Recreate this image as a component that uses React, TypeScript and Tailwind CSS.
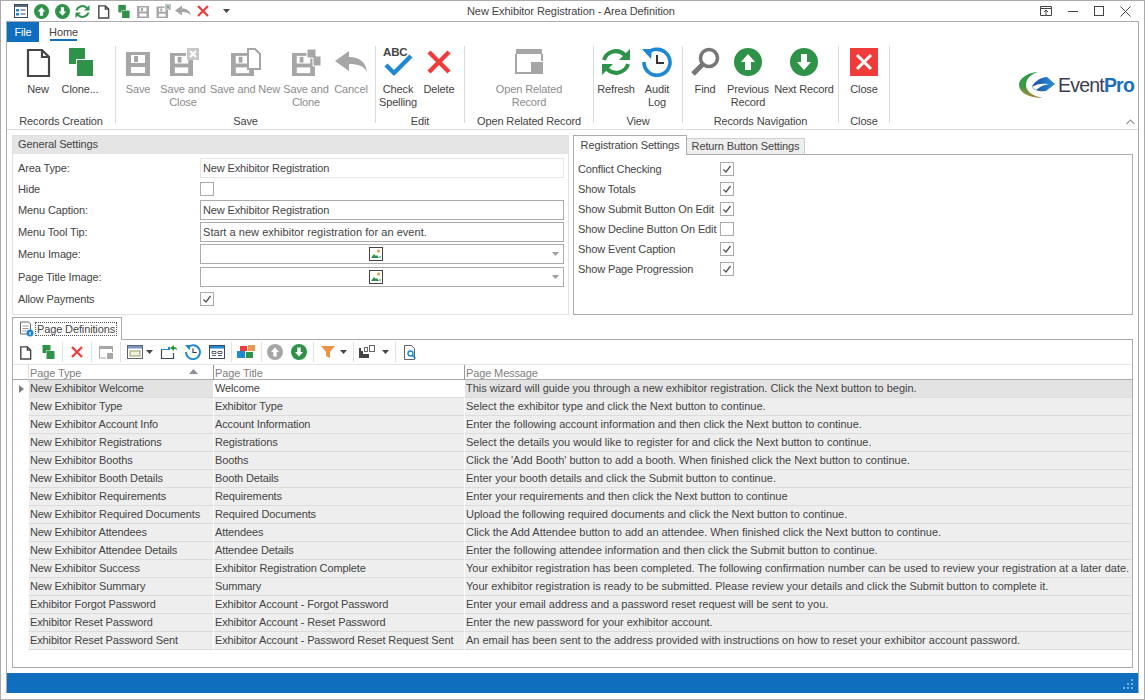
import React from "react";

const G = "#2e9348";
const GR = "#a6a6a6";
const R = "#ef3b39";
const B = "#1e88d2";
const D = "#454545";

type P = { s?: number };

const Doc = ({ s = 32 }: P) => (
  <svg width={s} height={s} viewBox="0 0 32 32">
    <path d="M6 4h14l7 7v19H6z" fill="#fff" stroke={D} strokeWidth={s < 20 ? 3 : 2.2} />
    <path d="M20 4v7h7" fill="none" stroke={D} strokeWidth={s < 20 ? 3 : 2.2} />
  </svg>
);
const Clone = ({ s = 32 }: P) => (
  <svg width={s} height={s} viewBox="0 0 32 32">
    <rect x="5" y="2" width="16" height="16" fill={G} />
    <rect x="12" y="13" width="18" height="18" fill="#fff" />
    <rect x="13" y="14" width="16" height="16" fill={G} />
  </svg>
);
const Disk = ({ x = 0, y = 0, w = 24, c = GR }: { x?: number; y?: number; w?: number; c?: string }) => {
  const k = w / 24;
  return (
    <g transform={`translate(${x} ${y}) scale(${k})`}>
      <path d="M0 0h24v24H0z" fill={c} />
      <rect x="5" y="3" width="14" height="8" fill="#fff" />
      <rect x="8" y="4" width="4" height="6" fill={c} />
      <rect x="5" y="15" width="14" height="6" fill="#fff" />
    </g>
  );
};
const Save = ({ s = 32 }: P) => (
  <svg width={s} height={s} viewBox="0 0 32 32"><Disk x={4} y={6} /></svg>
);
const SaveClose = ({ s = 32 }: P) => (
  <svg width={s} height={s} viewBox="0 0 32 32">
    <Disk x={3} y={7} w={23} />
    <rect x="19" y="1" width="13" height="13" fill="#fff" />
    <rect x="20" y="2" width="12" height="12" fill="#c8c8c8" />
    <path d="M23 5l6 6M29 5l-6 6" stroke={s < 20 ? "#6fa57d" : "#fff"} strokeWidth="2" />
  </svg>
);
const SaveNew = ({ s = 32 }: P) => (
  <svg width={s} height={s} viewBox="0 0 32 32">
    <Disk x={2} y={7} w={23} />
    <path d="M19 3h7l5 5v15H19z" fill="#fff" stroke={GR} strokeWidth="2" />
  </svg>
);
const SaveClone = ({ s = 32 }: P) => (
  <svg width={s} height={s} viewBox="0 0 32 32">
    <Disk x={2} y={7} w={23} />
    <path d="M17 3h9v7h5v10h-8V12h-6z" fill={GR} stroke="#fff" strokeWidth="1" />
  </svg>
);
const Cancel = ({ s = 32, c = GR }: P & { c?: string }) => (
  <svg width={s} height={s} viewBox="0 0 32 32">
    <path d="M0 15L14 5v6c10 0 17 5 18 15-3-6-9-8-18-8v7z" fill={c} />
  </svg>
);
const XIcon = ({ s = 32 }: P) => (
  <svg width={s} height={s} viewBox="0 0 32 32">
    <path d="M6 6l20 20M26 6L6 26" stroke={R} strokeWidth="4.4" />
  </svg>
);
const CheckAbc = () => (
  <svg width="34" height="34" viewBox="0 0 34 34">
    <text x="2" y="11" fontSize="11.5" fontWeight="700" fill={D} fontFamily="Liberation Sans">ABC</text>
    <path d="M5 20l8 8L30 11" fill="none" stroke={B} strokeWidth="4.4" />
  </svg>
);
const Related = () => (
  <svg width="32" height="32" viewBox="0 0 32 32">
    <path d="M3 3h26v5H3z" fill={GR} />
    <path d="M3 8v19h15M29 8v7" fill="none" stroke={GR} strokeWidth="2" />
    <rect x="18" y="16" width="12" height="12" fill={GR} />
  </svg>
);
const Circle = ({ s = 28, c = G, up = true }: P & { c?: string; up?: boolean }) => (
  <svg width={s} height={s} viewBox="0 0 28 28">
    <circle cx="14" cy="14" r="14" fill={c} />
    {up ? (
      <path d="M14 6l7 8h-4v8h-6v-8H7z" fill="#fff" />
    ) : (
      <path d="M14 22l7-8h-4V6h-6v8H7z" fill="#fff" />
    )}
  </svg>
);
const Refresh = ({ s = 30 }: P) => (
  <svg width={s} height={s} viewBox="0 0 30 30">
    <path d="M3 13C5 6 15 0 24 8" fill="none" stroke={G} strokeWidth="4" />
    <path d="M29 2v11H18z" fill={G} />
    <path d="M27 17c-2 7-12 13-21 5" fill="none" stroke={G} strokeWidth="4" />
    <path d="M1 28V17h11z" fill={G} />
  </svg>
);
const Audit = ({ s = 30 }: P) => (
  <svg width={s} height={s} viewBox="0 0 30 30">
    <path d="M5 7A13 13 0 1 1 2 15" fill="none" stroke={B} strokeWidth="3.6" />
    <path d="M0 2h10l-1 10z" fill={B} />
    <path d="M15 8v8h7" fill="none" stroke="#333" strokeWidth="2" />
  </svg>
);
const Find = () => (
  <svg width="30" height="30" viewBox="0 0 30 30">
    <circle cx="19" cy="11" r="8.5" fill="none" stroke="#777" strokeWidth="3.6" />
    <path d="M13 17L3 27" stroke="#777" strokeWidth="5" />
  </svg>
);
const CloseRed = () => (
  <svg width="28" height="28" viewBox="0 0 28 28">
    <rect width="28" height="28" fill={R} />
    <path d="M7 7l14 14M21 7L7 21" stroke="#fff" strokeWidth="3" />
  </svg>
);
const Form = () => (
  <svg width="14" height="14" viewBox="0 0 14 14">
    <rect x=".5" y=".5" width="13" height="13" fill="#fff" stroke="#3d4a5c" />
    <rect x="1" y="1" width="12" height="2" fill="#5a6b85" />
    <rect x="2" y="5" width="3" height="2.500" fill={B} />
    <rect x="2" y="9" width="3" height="2.500" fill={B} />
    <path d="M6.500 6h5M6.500 10h5" stroke="#3d4a5c" strokeWidth="1.200" />
  </svg>
);
const Caret = () => (
  <svg width="7" height="4" viewBox="0 0 7 4"><path d="M0 0h7L3.500 4z" fill="#444" /></svg>
);
const ImageGlyph = () => (
  <svg width="14" height="14" viewBox="0 0 14 14">
    <rect x=".5" y=".5" width="13" height="13" fill="#fff" stroke="#444" />
    <path d="M2 11l3-4 2 2 1-1 2 3z" fill={G} />
    <circle cx="9.500" cy="4" r="1.500" fill="#e8973f" />
    <path d="M10 9h2v2h-2z" fill={G} opacity=".5" />
  </svg>
);
const Check = ({ on = true }: { on?: boolean }) => (
  <span className="flex h-[14px] w-[14px] shrink-0 items-center justify-center border border-[#ababab] bg-white">
    {on && (
      <svg width="10" height="10" viewBox="0 0 10 10">
        <path d="M1.500 5.500L4 8l4.500-6" fill="none" stroke="#555" strokeWidth="1.300" />
      </svg>
    )}
  </span>
);

const Logo = () => (
  <svg width="37" height="28" viewBox="0 0 37 28">
    <defs>
      <linearGradient id="lg" x1="0" y1="0" x2="0" y2="1">
        <stop offset="0" stopColor="#2f9a4a" />
        <stop offset=".55" stopColor="#3f9a44" />
        <stop offset="1" stopColor="#b08b3c" />
      </linearGradient>
      <linearGradient id="lb" x1="0" y1="0" x2="1" y2="0">
        <stop offset="0" stopColor="#1a4fa0" />
        <stop offset="1" stopColor="#2a8fd8" />
      </linearGradient>
    </defs>
    <path d="M19 1C7 2 0 8 0 14c0 7 9 13 24 13C13 25 7 20 7 14 7 8 12 3 19 1z" fill="url(#lg)" />
    <path d="M13 16c2-6 10-10 15-10l8 7-9 7c-6 1-11 0-14-4z" fill="url(#lb)" />
    <path d="M13 16c4-3 10-4 17-3-6 1-9 3-13 6z" fill="#fff" />
  </svg>
);

type Btn = { w: number; icon?: React.ReactNode; l: string[]; dis?: boolean };

const RBtn = ({ w, icon, l, dis }: Btn) => (
  <div className="flex h-[73px] shrink-0 flex-col items-center" style={{ width: w }}>
    <div className="flex h-[41px] w-full items-center justify-center pb-[4px] pt-[3px]">{icon}</div>
    <div className={`text-center leading-[13px] ${dis ? "text-[#8c8c8c]" : "text-[#444]"}`}>
      {l.map((t) => (
        <div key={t} className="whitespace-nowrap">{t}</div>
      ))}
    </div>
  </div>
);

const Group = ({ w, pl = 2, label, items }: { w: number; pl?: number; label: string; items: Btn[] }) => (
  <div className="flex shrink-0 flex-col" style={{ width: w }}>
    <div className="flex" style={{ paddingLeft: pl }}>
      {items.map((b) => <RBtn key={b.l.join()} {...b} />)}
    </div>
    <div className="h-[13px] text-center leading-[13px] text-[#444]">{label}</div>
  </div>
);
const RSep = () => <div className="my-[4px] w-px shrink-0 bg-[#dcdcdc]" />;
const TSep = () => <div className="mx-[6px] h-[20px] w-px shrink-0 bg-[#e1e1e1]" />;
const TSepS = () => <div className="ml-[6px] mr-[5px] h-[20px] w-px shrink-0 bg-[#e1e1e1]" />;
const TSepM = () => <div className="ml-[6px] mr-[4px] h-[20px] w-px shrink-0 bg-[#e1e1e1]" />;

const rows: [string, string, string][] = [
  ["New Exhibitor Welcome", "Welcome", "This wizard will guide you through a new exhibitor registration. Click the Next button to begin."],
  ["New Exhibitor Type", "Exhibitor Type", "Select the exhibitor type and click the Next button to continue."],
  ["New Exhibitor Account Info", "Account Information", "Enter the following account information and then click the Next button to continue."],
  ["New Exhibitor Registrations", "Registrations", "Select the details you would like to register for and click the Next button to continue."],
  ["New Exhibitor Booths", "Booths", "Click the 'Add Booth' button to add a booth. When finished click the Next button to continue."],
  ["New Exhibitor Booth Details", "Booth Details", "Enter your booth details and click the Submit button to continue."],
  ["New Exhibitor Requirements", "Requirements", "Enter your requirements and then click the Next button to continue"],
  ["New Exhibitor Required Documents", "Required Documents", "Upload the following required documents and click the Next button to continue."],
  ["New Exhibitor Attendees", "Attendees", "Click the Add Attendee button to add an attendee. When finished click the Next button to continue."],
  ["New Exhibitor Attendee Details", "Attendee Details", "Enter the following attendee information and then click the Submit button to continue."],
  ["New Exhibitor Success", "Exhibitor Registration Complete", "Your exhibitor registration has been completed. The following confirmation number can be used to review your registration at a later date."],
  ["New Exhibitor Summary", "Summary", "Your exhibitor registration is ready to be submitted. Please review your details and click the Submit button to complete it."],
  ["Exhibitor Forgot Password", "Exhibitor Account - Forgot Password", "Enter your email address and a password reset request will be sent to you."],
  ["Exhibitor Reset Password", "Exhibitor Account - Reset Password", "Enter the new password for your exhibitor account."],
  ["Exhibitor Reset Password Sent", "Exhibitor Account - Password Reset Request Sent", "An email has been sent to the address provided with instructions on how to reset your exhibitor account password."],
];

const Field = ({ label, children, h, mt }: { label: string; children: React.ReactNode; h: string; mt: string }) => (
  <div className={`flex items-center pl-[5px] pr-[4px] ${h} ${mt}`}>
    <div className="w-[182px] shrink-0">{label}</div>
    {children}
  </div>
);
const Input = ({ v, light, wide }: { v: string; light?: boolean; wide?: boolean }) => (
  <div className={`flex h-full flex-1 items-center border px-[2px] ${light ? "border-[#e6e6e6]" : "border-[#ababab]"} ${wide ? "tracking-[0.04px]" : ""}`}>{v}</div>
);
const ImgSel = () => (
  <div className="flex h-full flex-1 items-center border border-[#ababab]">
    <div className="flex flex-1 justify-center pl-[4px]"><ImageGlyph /></div>
    <div className="flex w-[16px] justify-center opacity-50"><Caret /></div>
  </div>
);

const cell = "flex items-center border-b border-[#dcdcdc] border-l border-l-white pl-[1px] whitespace-nowrap";

export default function App() {
  return (
    <div className="flex h-[700px] w-[1145px] flex-col overflow-hidden border border-[#ababab] bg-white font-['Liberation_Sans',sans-serif] text-[11px] tracking-[-0.13px] text-[#444]">
      {/* title bar */}
      <div className="flex h-[20px] shrink-0 items-center">
        <div className="flex w-[466px] shrink-0 items-center">
          <div className="flex w-[30px] justify-end pr-[3px]"><Form /></div>
          <div className="flex w-[21px] justify-center"><Circle s={15} /></div>
          <div className="flex w-[20px] justify-center"><Circle s={15} up={false} /></div>
          <div className="flex w-[21px] justify-center"><Refresh s={15} /></div>
          <div className="flex w-[20px] justify-center"><Doc s={15} /></div>
          <div className="flex w-[20px] justify-center"><Clone s={15} /></div>
          <div className="flex w-[20px] justify-center"><Save s={16} /></div>
          <div className="flex w-[20px] justify-center"><SaveClose s={16} /></div>
          <div className="flex w-[20px] justify-center"><Cancel s={16} /></div>
          <div className="flex w-[20px] justify-center"><XIcon s={16} /></div>
          <div className="ml-[10px]"><Caret /></div>
        </div>
        <div className="whitespace-nowrap tracking-[-0.07px]">New Exhibitor Registration - Area Definition</div>
        <div className="ml-auto flex items-center pr-[6px]">
          <div className="flex w-[26px] justify-center">
            <svg width="12" height="12" viewBox="0 0 12 12"><path d="M.5 1.500h11v9H.5zM.5 3.500h11" fill="none" stroke="#444" /><path d="M6 10V5M4 7l2-2 2 2" fill="none" stroke="#444" /></svg>
          </div>
          <div className="flex w-[27px] justify-center"><div className="h-px w-[10px] bg-[#444]" /></div>
          <div className="flex w-[26px] justify-center"><div className="h-[10px] w-[10px] border border-[#444]" /></div>
          <div className="flex w-[26px] justify-center">
            <svg width="11" height="11" viewBox="0 0 11 11"><path d="M.5.500l10 10M10.500.500l-10 10" stroke="#444" /></svg>
          </div>
        </div>
      </div>

      {/* window frame */}
      <div className="ml-[5px] flex h-[672px] w-[1133px] shrink-0 flex-col border-x border-t border-[#ababab]">
        <div className="flex h-[20px] shrink-0">
          <div className="flex h-full w-[32px] items-center justify-center bg-[#106ebe] text-white">File</div>
          <div className="relative ml-[11px] flex h-full w-[27px] items-center justify-center">
            Home
            <div className="absolute bottom-[1px] left-0 right-0 h-[2px] bg-[#106ebe]" />
          </div>
        </div>

        {/* ribbon */}
        <div className="relative flex h-[88px] shrink-0 border-b border-[#dcdcdc] pb-[2px]">
          <Group w={108} pl={10} label="Records Creation" items={[
            { w: 42, icon: <Doc />, l: ["New"] },
            { w: 42, icon: <Clone />, l: ["Clone..."] },
          ]} />
          <RSep />
          <Group w={259} label="Save" items={[
            { w: 40, icon: <Save />, l: ["Save"], dis: true },
            { w: 50, icon: <SaveClose />, l: ["Save and", "Close"], dis: true },
            { w: 74, icon: <SaveNew />, l: ["Save and New"], dis: true },
            { w: 48, icon: <SaveClone />, l: ["Save and", "Clone"], dis: true },
            { w: 42, icon: <Cancel />, l: ["Cancel"], dis: true },
          ]} />
          <RSep />
          <Group w={88} label="Edit" items={[
            { w: 40, icon: <CheckAbc />, l: ["Check", "Spelling"] },
            { w: 42, icon: <XIcon />, l: ["Delete"] },
          ]} />
          <RSep />
          <Group w={128} pl={0} label="Open Related Record" items={[
            { w: 128, icon: <Related />, l: ["Open Related", "Record"], dis: true },
          ]} />
          <RSep />
          <Group w={88} label="View" items={[
            { w: 40, icon: <Refresh />, l: ["Refresh"] },
            { w: 42, icon: <Audit />, l: ["Audit", "Log"] },
          ]} />
          <RSep />
          <Group w={155} label="Records Navigation" items={[
            { w: 40, icon: <Find />, l: ["Find"] },
            { w: 46, icon: <Circle />, l: ["Previous", "Record"] },
            { w: 66, icon: <Circle up={false} />, l: ["Next Record"] },
          ]} />
          <RSep />
          <Group w={50} pl={0} label="Close" items={[
            { w: 50, icon: <CloseRed />, l: ["Close"] },
          ]} />
          <RSep />
          <div className="ml-auto flex h-[66px] items-center pr-[4px] pt-[20px]">
            <Logo />
            <span className="relative ml-[2px] whitespace-nowrap pt-[2px] text-[19.5px] leading-none tracking-[-0.8px] text-[#3d3a52]">
              Event<span className="font-bold text-[#1c6fb8]">Pro</span>
            </span>
          </div>
          <svg className="absolute bottom-[4px] right-[3px]" width="9" height="6" viewBox="0 0 9 6"><path d="M.5 5L4.500 1l4 4" fill="none" stroke="#999" strokeWidth="1.200" /></svg>
        </div>

        {/* content */}
        <div className="flex min-h-0 flex-1 flex-col px-[5px] pt-[5px]">
          <div className="flex h-[180px] shrink-0 gap-[4px]">
            <div className="flex w-[557px] shrink-0 flex-col border border-[#e1e1e1]">
              <div className="flex h-[18px] shrink-0 items-center bg-[#e5e5e5] pb-px pl-[5px]">General Settings</div>
              <Field label="Area Type:" h="h-[20px]" mt="mt-[4px]"><Input v="New Exhibitor Registration" light /></Field>
              <Field label="Hide" h="h-[14px]" mt="mt-[4px]"><Check on={false} /></Field>
              <Field label="Menu Caption:" h="h-[20px]" mt="mt-[4px]"><Input v="New Exhibitor Registration" /></Field>
              <Field label="Menu Tool Tip:" h="h-[20px]" mt="mt-[2px]"><Input v="Start a new exhibitor registration for an event." wide /></Field>
              <Field label="Menu Image:" h="h-[20px]" mt="mt-[2px]"><ImgSel /></Field>
              <Field label="Page Title Image:" h="h-[20px]" mt="mt-[3px]"><ImgSel /></Field>
              <Field label="Allow Payments" h="h-[14px]" mt="mt-[5px]"><Check /></Field>
            </div>
            <div className="flex min-w-0 flex-1 flex-col">
              <div className="relative z-10 flex h-[20px] shrink-0 items-end">
                <div className="flex h-[20px] w-[114px] items-center justify-center border-x border-t border-[#ababab] bg-white">Registration Settings</div>
                <div className="mb-px flex h-[16px] w-[118px] items-center justify-center border-r border-t border-[#d0d0d0] bg-[#eeeeee]">Return Button Settings</div>
              </div>
              <div className="-mt-px flex-1 border border-[#ababab] pl-[4px] pt-[4px]">
                {[
                  ["Conflict Checking", true],
                  ["Show Totals", true],
                  ["Show Submit Button On Edit", true],
                  ["Show Decline Button On Edit", false],
                  ["Show Event Caption", true],
                  ["Show Page Progression", true],
                ].map(([t, on]) => (
                  <div key={t as string} className="flex h-[20px] items-center">
                    <div className="w-[142px] shrink-0 whitespace-nowrap">{t as string}</div>
                    <Check on={on as boolean} />
                  </div>
                ))}
              </div>
            </div>
          </div>

          {/* tab */}
          <div className="mt-[2px] flex h-[22px] shrink-0">
            <div className="relative z-10 flex h-[23px] w-[110px] items-center border-x border-t border-[#ababab] bg-white pl-[6px]">
              <svg width="15" height="16" viewBox="0 0 15 16">
                <path d="M1.500 1h8l2 2v10h-10z" fill="#fff" stroke="#666" />
                <path d="M3.500 5h6M3.500 7.500h6M3.500 10h4" stroke="#9a9a9a" />
                <circle cx="11" cy="12" r="3.500" fill={B} />
                <rect x="10.500" y="11" width="1" height="3" fill="#fff" />
              </svg>
              <span className="ml-px border border-dotted border-[#555] px-px leading-[12px]">Page Definitions</span>
            </div>
          </div>

          {/* grid */}
          <div className="flex h-[329px] shrink-0 flex-col border border-[#ababab]">
            <div className="flex h-[25px] shrink-0 items-center border-b border-[#e5e5e5] pl-[4px]">
              <div className="flex w-[16px] justify-center"><Doc s={15} /></div>
              <div className="ml-[7px] flex w-[16px] justify-center"><Clone s={16} /></div>
              <TSep />
              <XIcon s={16} />
              <TSep />
              <svg width="16" height="16" viewBox="0 0 16 16"><path d="M1 2h14v3H1z" fill={GR} /><path d="M1.500 5v9H8M14.500 5v3" fill="none" stroke={GR} /><rect x="9" y="9" width="6" height="6" fill={GR} /></svg>
              <TSep />
              <svg width="16" height="16" viewBox="0 0 16 16"><rect x=".5" y="1.500" width="15" height="13" fill="#fff" stroke="#5a6472" /><rect x="1" y="2" width="14" height="2.500" fill="#7d93c4" /><rect x="3" y="7" width="10" height="5" fill="#eef0dc" stroke="#9a9a6a" /></svg>
              <div className="ml-[3px]"><Caret /></div>
              <div className="ml-[7px] flex w-[18px] justify-center">
                <svg width="18" height="16" viewBox="0 0 18 16"><path d="M1.500 6v8.500h12V9" fill="none" stroke="#3d4a5c" strokeWidth="1.200" /><path d="M1 5h7V3h2v3H1z" fill={B} /><path d="M10 4l4-3v2c2 0 3 1 3 3-1-1-2-1-3-1v2z" fill={G} /></svg>
              </div>
              <div className="ml-[7px]"><Audit s={16} /></div>
              <div className="ml-[8px]">
                <svg width="16" height="16" viewBox="0 0 16 16"><rect x=".5" y="1.500" width="15" height="13" fill="#fff" stroke="#3d4a5c" /><rect x="1" y="2" width="14" height="2.500" fill={B} /><path d="M3 7.500h4v2H3zM9 7.500h4v2H9zM3 11.500h4M9 11.500h4" fill="none" stroke="#5a6472" /></svg>
              </div>
              <TSepS />
              <svg width="18" height="14" viewBox="0 0 18 14"><rect x="0" y="6" width="8" height="7" fill={B} /><rect x="9" y="7" width="7" height="6" fill={G} /><rect x="3" y="1" width="7" height="5" fill={R} /><rect x="11" y="0" width="7" height="6" fill="#e79a4e" /></svg>
              <TSepS />
              <Circle s={16} c={GR} />
              <div className="ml-[8px]"><Circle s={16} up={false} /></div>
              <TSep />
              <svg width="16" height="16" viewBox="0 0 16 16"><path d="M1 2h14l-5 6v6l-4-2V8z" fill="#ec9248" /></svg>
              <div className="ml-[4px]"><Caret /></div>
              <TSepM />
              <svg width="18" height="16" viewBox="0 0 18 16"><path d="M1 4v10h10v-4H5V4z" fill="#454545" /><rect x="3" y="4" width="2" height="3" fill="#fff" /><rect x="11.500" y="1.500" width="5" height="6" fill="#fff" stroke="#666" /><rect x="6.500" y="3.500" width="3" height="4" fill="#fff" stroke="#666" /></svg>
              <div className="ml-[6px]"><Caret /></div>
              <TSep />
              <svg width="16" height="17" viewBox="0 0 16 17"><path d="M2.500 1.500h7l3 3v11h-10z" fill="#fff" stroke="#5a6472" /><circle cx="8.500" cy="9.500" r="2.500" fill="none" stroke={B} strokeWidth="1.400" /><path d="M10.500 11.500l3 3" stroke={B} strokeWidth="1.600" /></svg>
            </div>
            <div className="grid h-[15px] shrink-0 grid-cols-[15px_185px_251px_1fr] border-b border-[#ababab] pb-px text-[#7f7f7f]">
              <div />
              <div className="relative flex items-center border-l border-[#dcdcdc] pl-[1px]">
                Page Type
                <svg className="absolute right-[15px] top-[4px]" width="9" height="5" viewBox="0 0 9 5"><path d="M0 5h9L4.500 0z" fill="#8a8f98" /></svg>
              </div>
              <div className="flex items-center border-l border-[#999] pl-[1px]">Page Title</div>
              <div className="flex items-center border-l border-[#999] pl-[1px]">Page Message</div>
            </div>
            {rows.map((r, i) => (
              <div key={r[0]} className="grid h-[18px] shrink-0 grid-cols-[15px_185px_251px_1fr]">
                <div className="flex items-center justify-center pl-[1px]">
                  {i === 0 && <svg width="5" height="8" viewBox="0 0 5 8"><path d="M0 0l5 4-5 4z" fill="#7f7f7f" /></svg>}
                </div>
                <div className={`${cell} ${i === 0 ? "bg-[#e3e3e3]" : "bg-[#eeeeee]"}`}>{r[0]}</div>
                <div className={`${cell} ${i === 0 ? "bg-white" : "bg-[#eeeeee]"}`}>{r[1]}</div>
                <div className={`${cell} tracking-[-0.02px] ${i === 0 ? "bg-[#e3e3e3]" : "bg-[#eeeeee]"}`}>{r[2]}</div>
              </div>
            ))}
          </div>
        </div>

        {/* status */}
        <div className="flex h-[20px] shrink-0 items-end justify-end bg-[#106ebe] pb-[3px] pr-[4px]">
          <svg width="11" height="11" viewBox="0 0 11 11">
            {[[8, 0], [4, 4], [8, 4], [0, 8], [4, 8], [8, 8]].map(([x, y]) => (
              <rect key={`${x}-${y}`} x={x} y={y} width="2" height="2" fill="#7fb0dc" />
            ))}
          </svg>
        </div>
      </div>
    </div>
  );
}
